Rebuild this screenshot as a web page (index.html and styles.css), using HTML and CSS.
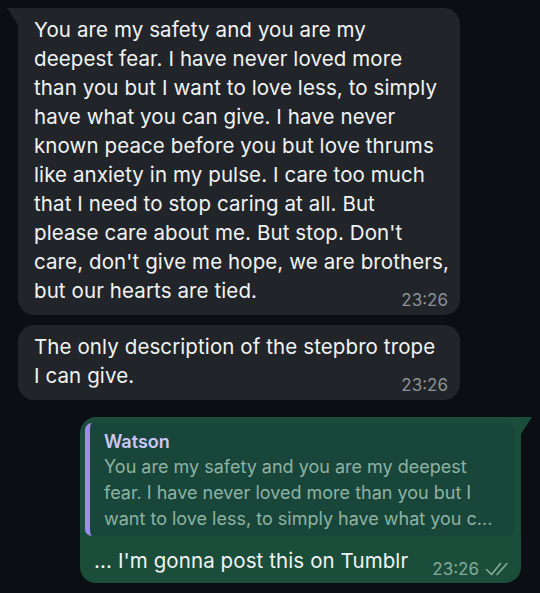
FILE: index.html
```html
<!DOCTYPE html>
<html lang="en">
<head>
    <meta charset="UTF-8">
    <meta name="viewport" content="width=device-width, initial-scale=1.0">
    <title>Chat</title>

    <link rel="stylesheet" href="styles.css">
</head>
<body>

<div class="chat">

    <div class="msg in first">
        <p class="text">You are my safety and you are my<br>
        deepest fear. I have never loved more<br>
        than you but I want to love less, to simply<br>
        have what you can give. I have never<br>
        known peace before you but love thrums<br>
        like anxiety in my pulse. I care too much<br>
        that I need to stop caring at all. But<br>
        please care about me. But stop. Don't<br>
        care, don't give me hope, we are brothers,<br>
        but our hearts are tied.</p>
        <div class="meta"><span class="time">23:26</span></div>
    </div>

    <div class="msg in">
        <p class="text">The only description of the stepbro trope<br>
        I can give.</p>
        <div class="meta"><span class="time">23:26</span></div>
    </div>

    <div class="msg out">
        <div class="reply">
            <div class="reply-name">Watson</div>
            <div class="reply-text">You are my safety and you are my deepest<br>
            fear. I have never loved more than you but I<br>
            want to love less, to simply have what you c...</div>
        </div>
        <p class="text">... I'm gonna post this on Tumblr</p>
        <div class="meta">
            <span class="time">23:26</span>
            <svg class="checks" width="24" height="14" viewBox="0 0 24 14">
                <polyline points="1.5,7.5 6.5,12.5 15.5,1.5" />
                <polyline points="12,12.5 22,1.5" />
            </svg>
        </div>
    </div>

</div>

</body>
</html>
```

FILE: styles.css
```css
*{
    padding: 0;
    margin: 0;
    box-sizing: border-box;
}

body{
    background-color: #0b0e12;
    font-family: Inter, "Liberation Sans", sans-serif;
    color: #f1f3f4;
}

.chat
{
    display: flex;
    flex-direction: column;
    align-items: flex-start;
    gap: 10px;
    padding-top: 8px;
}

.msg
{
    position: relative;
    width: 442px;
    border-radius: 16px;
    padding: 7px 16px 5px 16px;
}

.msg.in
{
    margin-left: 18px;
    background-color: #212529;
}

.msg.first
{
    border-top-left-radius: 0;
}

/* little tail on the first bubble */
.msg.first::before
{
    content: "";
    position: absolute;
    top: 0;
    left: -11px;
    width: 11px;
    height: 17px;
    background-color: #212529;
    clip-path: polygon(0 0, 100% 0, 100% 100%);
}

.text
{
    font-size: 20.5px;
    letter-spacing: 0.1px;
    line-height: 29px;
    white-space: nowrap;
}

.meta
{
    display: flex;
    justify-content: flex-end;
    align-items: center;
    gap: 6px;
    margin-top: -15px;
    margin-right: -4px;
    height: 20px;
}

.time
{
    font-size: 17px;
    line-height: 20px;
    color: #8b9196;
}

.msg.out
{
    margin-left: 80px;
    margin-top: 7px;
    width: 441px;
    background-color: #1b4d3b;
    border-top-right-radius: 0;
    padding: 6px 14px 4px 14px;
}

.msg.out::after
{
    content: "";
    position: absolute;
    top: 0;
    right: -11px;
    width: 11px;
    height: 17px;
    background-color: #1b4d3b;
    clip-path: polygon(0 0, 100% 0, 0 100%);
}

.reply
{
    margin: 0 -8px 0 -9px;
    background-color: #19463a;
    border-left: 5px solid #9d8df1;
    border-radius: 7px;
    padding: 7px 12px 4px 14px;
}

.reply-name
{
    font-size: 18px;
    line-height: 24px;
    font-weight: 600;
    color: #cdc5f8;
}

.reply-text
{
    font-size: 18px;
    line-height: 26px;
    color: #8fb2a2;
    white-space: nowrap;
    overflow: hidden;
}

.msg.out .text
{
    margin-top: 10px;
}

.msg.out .meta
{
    margin-top: -16px;
    margin-right: -2px;
}

.msg.out .time
{
    color: #86aa99;
}

.checks
{
    fill: none;
    stroke: #86aa99;
    stroke-width: 1.6;
    stroke-linecap: round;
    stroke-linejoin: round;
}
```
